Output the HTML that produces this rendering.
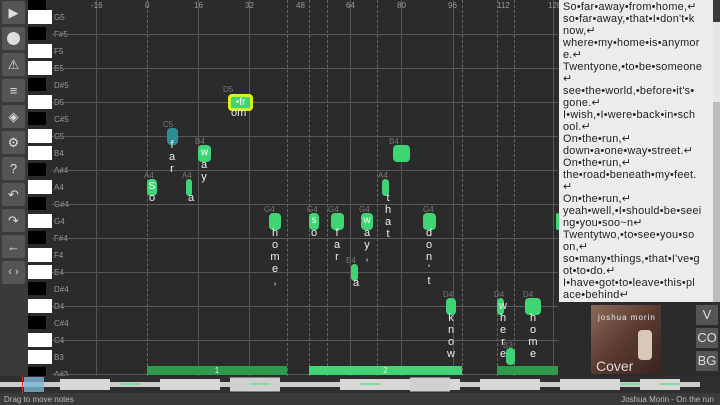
<!DOCTYPE html>
<html><head><meta charset="utf-8"><style>
*{margin:0;padding:0;box-sizing:border-box}
body{width:720px;height:405px;overflow:hidden;background:#2b2b2b;font-family:"Liberation Sans",sans-serif;position:relative}
.a{position:absolute}
.tb{position:absolute;left:2px;width:23px;height:23px;background:#555;border-radius:2px;color:#ddd;font-size:13px;text-align:center;line-height:23px}
.wk{position:absolute;left:28px;width:24px;height:14px;background:#fff}
.bk{position:absolute;left:28px;width:18px;height:13px;background:#000}
.kl{position:absolute;left:54px;font-size:8px;color:#9a9a9a}
.hl{position:absolute;left:52px;width:506px;height:1px;background:#5a5a5a}
.vl{position:absolute;top:0;width:1px;height:376px;background:#555}
.dl{position:absolute;top:0;width:0;height:376px;border-left:1px dashed #666}
.bt{position:absolute;top:1px;font-size:8px;color:#999}
.n{position:absolute;background:#3fd474;border-radius:4px;color:#fff;font-size:10px;text-align:center;line-height:16px;height:17px}
.nl{position:absolute;font-size:8px;color:#777}
.ly{position:absolute;width:12px;text-align:center;color:#eee;font-size:11px;line-height:12px}
.lp{position:absolute;left:559px;top:0;width:154px;height:302px;background:#ececec;color:#222;font-size:10.9px;letter-spacing:0.25px;line-height:12px;padding:1px 4px;white-space:pre;overflow:hidden}
.sb{position:absolute;height:9px;top:366px;color:#dfd;font-size:8px;text-align:center;line-height:9px}
.rb{position:absolute;left:696px;width:22px;height:20px;background:#555;color:#ddd;font-size:13px;text-align:center;line-height:20px}
</style></head><body>
<div class="a" style="left:0;top:0;width:28px;height:393px;background:#3a3a3a"></div>
<div class="a" style="left:28px;top:0;width:24px;height:393px;background:#2b2b2b"></div>
<div class="tb" style="top:1px">▶</div>
<div class="tb" style="top:27px"><div style="width:13px;height:13px;border-radius:50%;background:#ddd;margin:5px auto"></div></div>
<div class="tb" style="top:53px">⚠</div>
<div class="tb" style="top:79px">≡</div>
<div class="tb" style="top:105px">◈</div>
<div class="tb" style="top:131px">⚙</div>
<div class="tb" style="top:157px">?</div>
<div class="tb" style="top:183px">↶</div>
<div class="tb" style="top:209px">↷</div>
<div class="tb" style="top:235px">←</div>
<div class="tb" style="top:261px;font-size:11px">‹ ›</div>

<div class="bk" style="top:-3px"></div>
<div class="wk" style="top:10px"></div><div class="kl" style="top:13px">G5</div>
<div class="bk" style="top:27px"></div><div class="kl" style="top:30px">F#5</div>
<div class="wk" style="top:44px"></div><div class="kl" style="top:47px">F5</div>
<div class="wk" style="top:61px"></div><div class="kl" style="top:64px">E5</div>
<div class="bk" style="top:78px"></div><div class="kl" style="top:81px">D#5</div>
<div class="wk" style="top:95px"></div><div class="kl" style="top:98px">D5</div>
<div class="bk" style="top:112px"></div><div class="kl" style="top:115px">C#5</div>
<div class="wk" style="top:129px"></div><div class="kl" style="top:132px">C5</div>
<div class="wk" style="top:146px"></div><div class="kl" style="top:149px">B4</div>
<div class="bk" style="top:163px"></div><div class="kl" style="top:166px">A#4</div>
<div class="wk" style="top:180px"></div><div class="kl" style="top:183px">A4</div>
<div class="bk" style="top:197px"></div><div class="kl" style="top:200px">G#4</div>
<div class="wk" style="top:214px"></div><div class="kl" style="top:217px">G4</div>
<div class="bk" style="top:231px"></div><div class="kl" style="top:234px">F#4</div>
<div class="wk" style="top:248px"></div><div class="kl" style="top:251px">F4</div>
<div class="wk" style="top:265px"></div><div class="kl" style="top:268px">E4</div>
<div class="bk" style="top:282px"></div><div class="kl" style="top:285px">D#4</div>
<div class="wk" style="top:299px"></div><div class="kl" style="top:302px">D4</div>
<div class="bk" style="top:316px"></div><div class="kl" style="top:319px">C#4</div>
<div class="wk" style="top:333px"></div><div class="kl" style="top:336px">C4</div>
<div class="wk" style="top:350px"></div><div class="kl" style="top:353px">B3</div>
<div class="bk" style="top:367px"></div><div class="kl" style="top:370px">A#3</div>

<div class="hl" style="top:34px"></div><div class="hl" style="top:68px"></div><div class="hl" style="top:102px"></div><div class="hl" style="top:136px"></div><div class="hl" style="top:170px"></div><div class="hl" style="top:204px"></div><div class="hl" style="top:238px"></div><div class="hl" style="top:272px"></div><div class="hl" style="top:306px"></div><div class="hl" style="top:340px"></div><div class="hl" style="top:374px"></div>
<div class="vl" style="left:96px"></div><div class="vl" style="left:198px"></div><div class="vl" style="left:249px"></div><div class="vl" style="left:350px"></div><div class="vl" style="left:401px"></div><div class="vl" style="left:453px"></div><div class="vl" style="left:553px"></div>
<div class="dl" style="left:147px"></div><div class="dl" style="left:287px"></div><div class="dl" style="left:309px"></div><div class="dl" style="left:327px"></div><div class="dl" style="left:377px"></div><div class="dl" style="left:462px"></div><div class="dl" style="left:497px"></div><div class="dl" style="left:514px"></div>
<div class="bt" style="left:91px">-16</div><div class="bt" style="left:145px">0</div><div class="bt" style="left:194px">16</div><div class="bt" style="left:245px">32</div><div class="bt" style="left:296px">48</div><div class="bt" style="left:346px">64</div><div class="bt" style="left:397px">80</div><div class="bt" style="left:448px">96</div><div class="bt" style="left:497px">112</div><div class="bt" style="left:548px">128</div>

<div class="nl" style="left:144px;top:171px">A4</div><div class="n" style="left:147px;top:179px;width:10px">S</div><div class="ly" style="left:146px;top:192px">o</div>
<div class="nl" style="left:163px;top:120px">C5</div><div class="n" style="left:167px;top:128px;width:11px;background:#2a8f94"></div>
<div class="ly" style="left:166px;top:139px;line-height:12px">f<br>a<br>r</div>
<div class="nl" style="left:182px;top:171px">A4</div><div class="n" style="left:186px;top:179px;width:6px"></div><div class="ly" style="left:185px;top:192px">a</div>
<div class="nl" style="left:195px;top:137px">B4</div><div class="n" style="left:198px;top:145px;width:13px">w</div><div class="ly" style="left:198px;top:159px">a<br>y</div>
<div class="nl" style="left:223px;top:85px">D5</div><div class="n" style="left:228px;top:94px;width:25px;border:3px solid #d9f21a;line-height:11px">•fr</div><div class="ly" style="left:231px;top:107px;width:14px">om</div>
<div class="nl" style="left:264px;top:205px">G4</div><div class="n" style="left:269px;top:213px;width:12px"></div><div class="ly" style="left:269px;top:227px">h<br>o<br>m<br>e<br>,</div>
<div class="nl" style="left:307px;top:205px">G4</div><div class="n" style="left:309px;top:213px;width:10px">s</div><div class="ly" style="left:308px;top:227px">o</div>
<div class="nl" style="left:328px;top:205px">G4</div><div class="n" style="left:331px;top:213px;width:13px"></div><div class="ly" style="left:331px;top:227px">f<br>a<br>r</div>
<div class="nl" style="left:359px;top:205px">G4</div><div class="n" style="left:361px;top:213px;width:12px">w</div><div class="ly" style="left:361px;top:227px">a<br>y<br>,</div>
<div class="nl" style="left:346px;top:256px">E4</div><div class="n" style="left:351px;top:264px;width:7px"></div><div class="ly" style="left:350px;top:277px">a</div>
<div class="nl" style="left:378px;top:171px">A4</div><div class="n" style="left:382px;top:179px;width:7px"></div><div class="ly" style="left:382px;top:192px">t<br>h<br>a<br>t</div>
<div class="nl" style="left:389px;top:137px">B4</div><div class="n" style="left:393px;top:145px;width:17px"></div>
<div class="nl" style="left:423px;top:205px">G4</div><div class="n" style="left:423px;top:213px;width:13px"></div><div class="ly" style="left:423px;top:227px">d<br>o<br>n<br>'<br>t</div>
<div class="nl" style="left:443px;top:290px">D4</div><div class="n" style="left:446px;top:298px;width:10px"></div><div class="ly" style="left:445px;top:312px">k<br>n<br>o<br>w</div>
<div class="nl" style="left:494px;top:290px">D4</div><div class="n" style="left:497px;top:298px;width:7px"></div><div class="ly" style="left:497px;top:300px">w<br>h<br>e<br>r<br>e</div>
<div class="nl" style="left:523px;top:290px">D4</div><div class="n" style="left:525px;top:298px;width:16px"></div><div class="ly" style="left:527px;top:312px">h<br>o<br>m<br>e</div>
<div class="nl" style="left:503px;top:341px">B3</div><div class="n" style="left:506px;top:348px;width:9px"></div>
<div class="n" style="left:556px;top:213px;width:3px"></div>

<div class="sb" style="left:147px;width:140px;background:#2e9a4c">1</div>
<div class="sb" style="left:309px;width:153px;background:#3fd474">2</div>
<div class="sb" style="left:497px;width:61px;background:#2e9a4c"></div>

<div class="lp">So•far•away•from•home,↵
so•far•away,•that•I•don't•k
now,↵
where•my•home•is•anymor
e.↵
Twentyone,•to•be•someone
↵
see•the•world,•before•it's•
gone.↵
I•wish,•I•were•back•in•sch
ool.↵
On•the•run,↵
down•a•one•way•street.↵
On•the•run,↵
the•road•beneath•my•feet.
↵
On•the•run,↵
yeah•well,•I•should•be•seei
ng•you•soo~n↵
Twentytwo,•to•see•you•so
on,↵
so•many•things,•that•I've•g
ot•to•do.↵
I•have•got•to•leave•this•pl
ace•behind↵</div>
<div class="a" style="left:713px;top:0;width:7px;height:302px;background:#3a3a3a"></div>
<div class="a" style="left:713px;top:22px;width:7px;height:80px;background:#e6e6e6"></div>
<div class="a" style="left:713px;top:102px;width:7px;height:200px;background:#bbb"></div>

<div class="a" style="left:591px;top:305px;width:70px;height:69px;background:linear-gradient(135deg,#8a6a5a,#5a3a30 50%,#3a2420)"></div>
<div class="a" style="left:598px;top:313px;font-size:8px;color:#eee;letter-spacing:1px">joshua morin</div>
<div class="a" style="left:638px;top:330px;width:14px;height:30px;background:#d8c8b8;border-radius:4px"></div>
<div class="a" style="left:596px;top:358px;font-size:14px;color:#ddd">Cover</div>
<div class="rb" style="top:305px">V</div><div class="rb" style="top:328px">CO</div><div class="rb" style="top:351px">BG</div>

<div class="a" style="left:0;top:376px;width:720px;height:17px;background:#2f2f2f"></div>
<svg class="a" style="left:0;top:376px" width="720" height="17">
<path d="M0 8.5h700" stroke="#ccc" stroke-width="5"/>
<path d="M60 8.5h50M160 8.5h60M340 8.5h120M480 8.5h60M560 8.5h60M640 8.5h40" stroke="#d8d8d8" stroke-width="11"/>
<path d="M230 8.5h50M410 8.5h40" stroke="#d0d0d0" stroke-width="14"/>
<rect x="24" y="1" width="20" height="15" fill="#7bb7d6" opacity="0.8"/>
<rect x="22" y="0" width="1" height="17" fill="#c33"/>
<path d="M120 8h20M250 8h20M360 8h20M620 8h20M660 8h20" stroke="#7fdc9c" stroke-width="2"/>
</svg>
<div class="a" style="left:0;top:393px;width:720px;height:12px;background:#3a3a3a"></div>
<div class="a" style="left:4px;top:395px;font-size:8px;color:#bbb">Drag to move notes</div>
<div class="a" style="right:6px;top:395px;font-size:8px;color:#bbb">Joshua Morin - On the run</div>
</body></html>
